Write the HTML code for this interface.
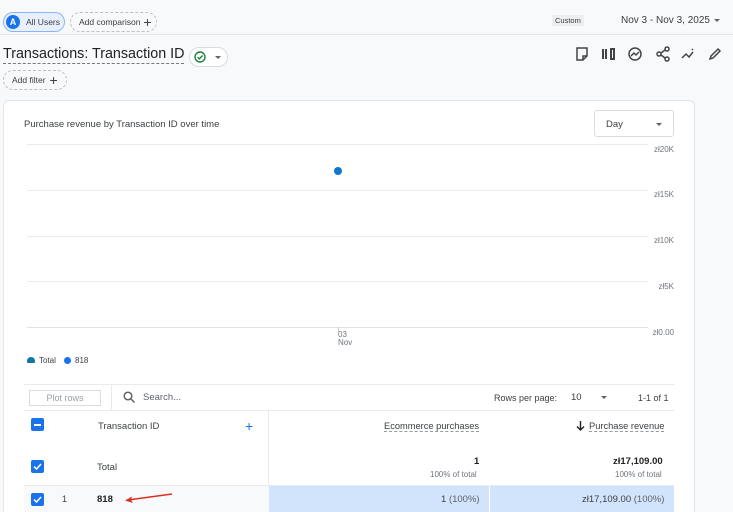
<!DOCTYPE html>
<html style="height:512px;overflow:hidden"><head><style>
*{box-sizing:border-box;margin:0;padding:0}
body{width:733px;height:512px;overflow:hidden;background:#f8f9fa;font-family:"Liberation Sans",Arial,sans-serif;color:#202124;position:relative}
.a{position:absolute;white-space:nowrap}
.chip{position:absolute;height:20px;border-radius:10px;font-size:9px;display:flex;align-items:center;white-space:nowrap}
.t9{font-size:9px;color:#3c4043}
.grid{position:absolute;left:27px;width:621px;height:1px;background:#ebebeb}
.yl{position:absolute;right:59px;font-size:8px;color:#70757a;text-align:right}
.cb{position:absolute;width:13px;height:13px;background:#1a73e8;border-radius:2px}
</style></head><body>
<div class="chip" style="left:3px;top:12px;width:62px;background:#e8f0fe;border:1px solid #8ab4f8;">
 <div style="width:14px;height:14px;border-radius:7px;background:#1a73e8;color:#fff;font-size:9px;font-weight:bold;text-align:center;line-height:14px;margin-left:2px">A</div><span style="margin-left:6px;color:#3c4043;font-size:8.5px">All Users</span></div>
<div class="chip" style="left:70px;top:12px;width:87px;border:1px dashed #bdc1c6;padding-left:8px;color:#3c4043;font-size:8.5px">Add comparison<span style="font-size:14px;margin-left:3px;font-weight:300">+</span></div>
<div class="a" style="left:552px;top:15px;background:#eceef0;font-size:7.5px;padding:1px 3px;color:#3c4043">Custom</div>
<div class="a t9" style="left:621px;top:15px;font-size:10px">Nov 3 - Nov 3, 2025</div>
<div class="a" style="left:714px;top:19px;border:3px solid transparent;border-top:3px solid #5f6368"></div>
<div class="a" style="left:0;top:34px;width:733px;height:1px;background:#e3e5e8"></div>
<div class="a" style="left:3px;top:45px;font-size:14.3px;color:#202124;border-bottom:1px dashed #777;line-height:18px">Transactions: Transaction ID</div>
<div class="chip" style="left:189px;top:47px;width:39px;border:1px solid #dadce0;background:#fff">
 <svg width="12" height="12" style="margin-left:4px" viewBox="0 0 12 12"><circle cx="6" cy="6" r="5" fill="none" stroke="#188038" stroke-width="1.4"/><path d="M3.5 6.2l1.8 1.7 3.3-3.4" fill="none" stroke="#188038" stroke-width="1.4"/></svg>
 <div style="margin-left:9px;border:3px solid transparent;border-top:3px solid #5f6368;margin-top:3px"></div></div>
<div class="chip" style="left:3px;top:70px;width:64px;border:1px dashed #bdc1c6;padding-left:8px;color:#3c4043;font-size:8.5px">Add filter<span style="font-size:14px;margin-left:4px;font-weight:300">+</span></div>
<svg class="a" style="left:574px;top:46px" width="150" height="16" viewBox="0 0 150 16" fill="none" stroke="#444" stroke-width="1.5">
 <path d="M3 2h10v8l-4 4H3z M9 14v-4h4"/>
 <path d="M29 3v10 M32 3v10 M37 3h3v10h-3z" stroke-width="2"/>
 <circle cx="61" cy="8" r="6"/><path d="M57 10l3-3 2 2 3-3"/>
 <circle cx="93" cy="3" r="2"/><circle cx="85" cy="8" r="2"/><circle cx="93" cy="13" r="2"/><path d="M87 7l4-3 M87 9l4 3"/>
 <path d="M108 12l4-4 3 3 4-5 M118 3l1 1"/>
 <path d="M136 13l1-3 7-7 2 2-7 7z"/>
</svg>
<div class="a" style="left:3px;top:100px;width:692px;height:412px;background:#fff;border:1px solid #e3e5e8;border-bottom:none;border-radius:6px 6px 0 0"></div>
<div class="a t9" style="left:24px;top:119px;font-size:9.5px">Purchase revenue by Transaction ID over time</div>
<div class="a" style="left:594px;top:110px;width:80px;height:27px;border:1px solid #dadce0;border-radius:3px;font-size:9.5px;padding:8px 0 0 11px;color:#3c4043">Day<div class="a" style="left:61px;top:12px;border:3.5px solid transparent;border-top:3.5px solid #5f6368"></div></div>
<div class="grid" style="top:144px"></div><div class="grid" style="top:190px"></div><div class="grid" style="top:236px"></div><div class="grid" style="top:281px"></div><div class="grid" style="top:327px;background:#e3e3e3"></div>
<div class="yl" style="top:145px">zł20K</div><div class="yl" style="top:190px">zł15K</div><div class="yl" style="top:236px">zł10K</div><div class="yl" style="top:282px">zł5K</div><div class="yl" style="top:328px">zł0.00</div>
<div class="a" style="left:338px;top:327px;width:1px;height:5px;background:#ccc"></div>
<div class="a" style="left:338px;top:331px;font-size:8px;color:#70757a;line-height:8px">03<br>Nov</div>
<div class="a" style="left:334px;top:167px;width:8px;height:8px;border-radius:4px;background:#1177cc"></div>
<div class="a" style="left:27px;top:357px;width:8px;height:6px;border-radius:4px 4px 1px 1px;background:#1177aa"></div>
<div class="a" style="left:39px;top:356px;font-size:8px;color:#3c4043">Total</div>
<div class="a" style="left:64px;top:357px;width:7px;height:7px;border-radius:4px;background:#1a73e8"></div>
<div class="a" style="left:75px;top:356px;font-size:8px;color:#3c4043">818</div>
<div class="a" style="left:24px;top:384px;width:650px;height:1px;background:#e8eaed"></div>
<div class="a" style="left:24px;top:410px;width:650px;height:1px;background:#e8eaed"></div>
<div class="a" style="left:111px;top:385px;width:1px;height:25px;background:#e8eaed"></div>
<div class="a" style="left:29px;top:390px;width:72px;height:16px;border:1px solid #dadce0;font-size:9px;color:#9aa0a6;text-align:center;line-height:14px">Plot rows</div>
<svg class="a" style="left:123px;top:391px" width="12" height="12" viewBox="0 0 12 12" fill="none" stroke="#5f6368" stroke-width="1.5"><circle cx="5" cy="5" r="3.8"/><path d="M8 8l3.5 3.5"/></svg>
<div class="a" style="left:143px;top:392px;font-size:9.5px;color:#5f6368">Search...</div>
<div class="a t9" style="left:494px;top:393px">Rows per page:</div>
<div class="a t9" style="left:571px;top:392px;font-size:9.5px">10</div>
<div class="a" style="left:601px;top:396px;border:3px solid transparent;border-top:3px solid #5f6368"></div>
<div class="a t9" style="left:638px;top:393px">1-1 of 1</div>
<div class="a" style="left:268px;top:410px;width:1px;height:76px;background:#e8eaed"></div>
<div class="a" style="left:24px;top:485px;width:650px;height:1px;background:#e8eaed"></div>
<div class="cb" style="left:31px;top:418px"><div style="position:absolute;left:3px;top:6px;width:7px;height:1.5px;background:#fff"></div></div>
<div class="a t9" style="left:98px;top:421px;font-size:9.5px">Transaction ID</div>
<div class="a" style="left:245px;top:418px;font-size:14px;color:#1a73e8">+</div>
<div class="a t9" style="left:384px;top:421px;font-size:9.3px;border-bottom:1px dashed #999">Ecommerce purchases</div>
<svg class="a" style="left:576px;top:420px" width="9" height="11" viewBox="0 0 9 11"><path d="M4.5 1v9 M1 6.5l3.5 3.5 3.5-3.5" fill="none" stroke="#202124" stroke-width="1.4"/></svg>
<div class="a t9" style="left:589px;top:421px;font-size:9.3px;border-bottom:1px dashed #999">Purchase revenue</div>
<div class="cb" style="left:31px;top:460px"><svg width="13" height="13" viewBox="0 0 13 13"><path d="M3 6.5l2.5 2.5 4.5-5" fill="none" stroke="#fff" stroke-width="1.5"/></svg></div>
<div class="a t9" style="left:97px;top:462px;font-size:9.5px">Total</div>
<div class="a" style="left:474px;top:456px;font-size:9.5px;font-weight:bold">1</div>
<div class="a" style="left:430px;top:470px;font-size:8px;color:#70757a">100% of total</div>
<div class="a" style="left:613px;top:456px;font-size:9.5px;font-weight:bold">zł17,109.00</div>
<div class="a" style="left:615px;top:470px;font-size:8px;color:#70757a">100% of total</div>
<div class="a" style="left:24px;top:486px;width:245px;height:26px;background:#f8f9fa"></div>
<div class="a" style="left:269px;top:486px;width:405px;height:26px;background:#d2e3fc"></div>
<div class="a" style="left:489px;top:486px;width:1px;height:26px;background:#fff"></div>
<div class="cb" style="left:31px;top:493px"><svg width="13" height="13" viewBox="0 0 13 13"><path d="M3 6.5l2.5 2.5 4.5-5" fill="none" stroke="#fff" stroke-width="1.5"/></svg></div>
<div class="a t9" style="left:62px;top:494px">1</div>
<div class="a" style="left:97px;top:494px;font-size:9.5px;font-weight:bold">818</div>
<svg class="a" style="left:122px;top:492px" width="52" height="12" viewBox="0 0 52 12"><path d="M50 2L6 8" stroke="#d93025" stroke-width="1.5"/><path d="M3 8.5l7-4-1 3.5 2 3z" fill="#d93025"/></svg>
<div class="a t9" style="left:441px;top:494px;font-size:9.5px">1 <span style="color:#5f6368">(100%)</span></div>
<div class="a t9" style="left:582px;top:494px;font-size:9.5px">zł17,109.00 <span style="color:#5f6368">(100%)</span></div>
</body></html>
